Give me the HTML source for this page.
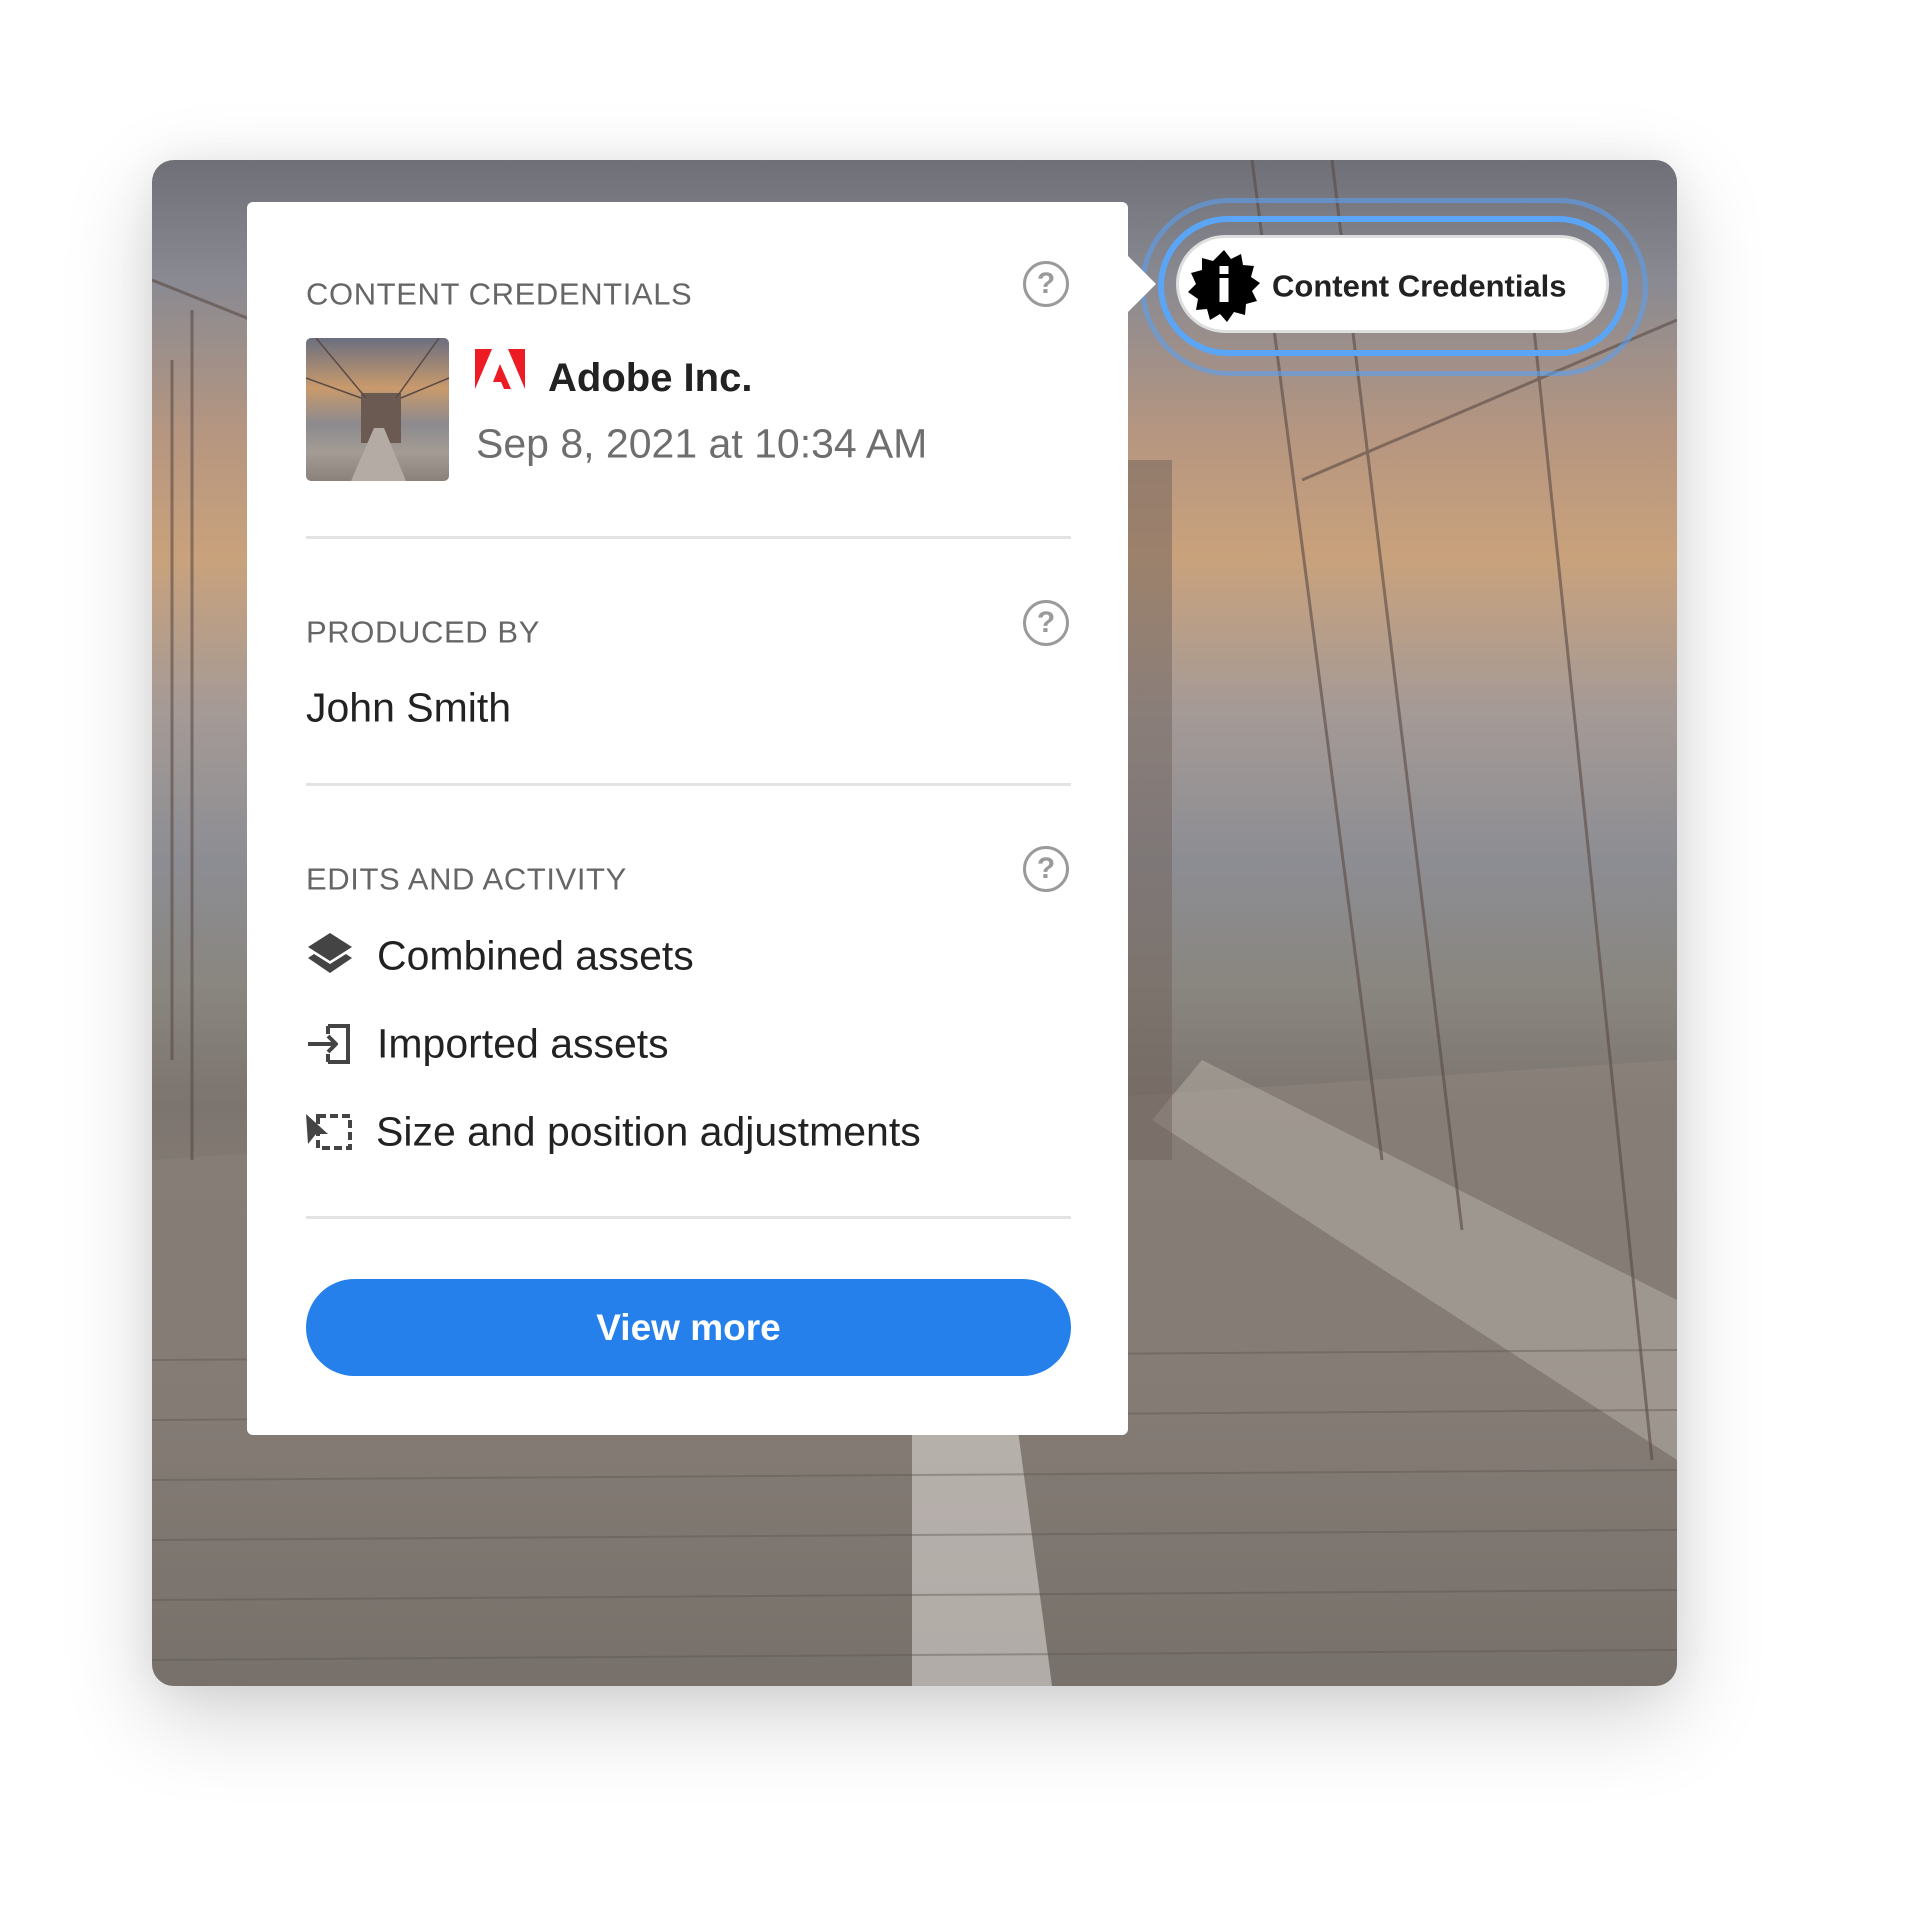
<!DOCTYPE html>
<html><head><meta charset="utf-8">
<style>
*{margin:0;padding:0;box-sizing:border-box}
html,body{width:1920px;height:1920px;background:#fff;overflow:hidden;font-family:"Liberation Sans",sans-serif}
.card{position:absolute;left:152px;top:160px;width:1525px;height:1526px;border-radius:22px;overflow:hidden;
box-shadow:0 30px 90px rgba(0,0,0,.18),0 0 40px rgba(0,0,0,.06);
background:linear-gradient(180deg,#6f6f78 0%,#8a8a92 8%,#b69680 18%,#c9a27c 26%,#a59a96 36%,#8c8d93 46%,#8a8680 54%,#7c746e 62%,#8a817a 72%,#968d85 82%,#8b847e 100%)}
.abs{position:absolute}
.panel{position:absolute;left:247px;top:202px;width:881px;height:1233px;background:#fff;border-radius:6px}
.lbl{position:absolute;left:306px;font-size:31px;color:#666;letter-spacing:.6px;line-height:1;transform:translateY(-50%)}
.help{position:absolute;width:46px;height:46px;border:3px solid #9a9a9a;border-radius:50%;color:#9a9a9a;font-size:30px;font-weight:bold;line-height:40px;text-align:center;transform:translate(-50%,-50%)}
.div{position:absolute;left:306px;width:765px;height:3px;background:#e3e3e3}
.txt{position:absolute;line-height:1;transform:translateY(-50%);white-space:nowrap}
</style></head><body>
<div class="card">
<svg class="abs" style="left:0;top:0" width="1525" height="1526" viewBox="0 0 1525 1526">
 <defs>
  <linearGradient id="deck" x1="0" y1="0" x2="0" y2="1"><stop offset="0" stop-color="#8c837c"/><stop offset="1" stop-color="#6f6862"/></linearGradient>
 </defs>
 <path d="M0 1000 L1525 900 L1525 1526 L0 1526Z" fill="url(#deck)" opacity=".7"/>
 <path d="M1050 900 L1525 1140 L1525 1300 L1000 960Z" fill="#b8b1aa" opacity=".5"/>
 <path d="M760 1000 L830 1000 L900 1526 L760 1526Z" fill="#d8d4d0" opacity=".6"/>
 <g stroke="#5a4a44" stroke-width="3" opacity=".6">
  <line x1="1100" y1="0" x2="1230" y2="1000"/><line x1="1180" y1="0" x2="1310" y2="1070"/>
  <line x1="1380" y1="150" x2="1500" y2="1300"/><line x1="860" y1="200" x2="860" y2="1000"/>
  <line x1="0" y1="120" x2="150" y2="180"/><line x1="1150" y1="320" x2="1525" y2="160"/>
  <line x1="20" y1="200" x2="20" y2="900"/><line x1="40" y1="150" x2="40" y2="1000"/>
 </g>
 <rect x="960" y="300" width="60" height="700" fill="#6f625c" opacity=".5"/>
 <g stroke="#5b5550" stroke-width="2" opacity=".4">
  <line x1="0" y1="1200" x2="1525" y2="1190"/><line x1="0" y1="1260" x2="1525" y2="1250"/>
  <line x1="0" y1="1320" x2="1525" y2="1310"/><line x1="0" y1="1380" x2="1525" y2="1370"/>
  <line x1="0" y1="1440" x2="1525" y2="1430"/><line x1="0" y1="1500" x2="1525" y2="1490"/>
 </g>
</svg>
</div>

<div class="abs" style="left:1140px;top:198px;width:508px;height:178px;border:5px solid rgba(90,160,240,.6);border-radius:89px"></div>
<div class="abs" style="left:1158px;top:216px;width:470px;height:140px;border:6px solid #5aa5f5;border-radius:70px"></div>
<div class="abs" style="left:1176px;top:235px;width:433px;height:98px;background:#fff;border:3px solid #dedede;border-radius:49px"></div>
<svg class="abs" style="left:1186px;top:248px" width="76" height="76" viewBox="-38 -38 76 76">
 <polygon fill="#000" points="0,-36 7,-27 17,-32 19,-21 30,-20 27,-9 36,-3 28,5 33,15 22,18 21,29 10,26 3,36 -4,28 -14,34 -17,23 -28,24 -26,13 -36,6 -28,-2 -33,-13 -22,-16 -22,-28 -11,-25"/>
 <rect x="-4.5" y="-8" width="9" height="24" fill="#fff"/><rect x="-4.5" y="-20" width="9" height="8" fill="#fff"/>
</svg>
<div class="txt" style="left:1272px;top:286px;font-size:31px;font-weight:bold;color:#222">Content Credentials</div>

<svg class="abs" style="left:1126px;top:254px" width="32" height="60"><polygon points="0,0 30,30 0,60" fill="#fff"/></svg>

<div class="panel"></div>
<div class="lbl" style="top:294px">CONTENT CREDENTIALS</div>
<div class="help" style="left:1046px;top:284px">?</div>

<div class="abs" style="left:306px;top:338px;width:143px;height:143px;border-radius:5px;overflow:hidden;background:linear-gradient(180deg,#6b6f80 0%,#c99a6c 35%,#8c8a8e 60%,#a49c94 80%,#8a827a 100%)">
 <svg width="143" height="143"><rect x="55" y="55" width="40" height="50" fill="#6a5a52"/><path d="M45 143 L68 90 L78 90 L100 143Z" fill="#b4aca4"/><g stroke="#5a4a44" stroke-width="1.5"><line x1="10" y1="0" x2="60" y2="60"/><line x1="133" y1="0" x2="90" y2="60"/><line x1="0" y1="40" x2="55" y2="60"/><line x1="143" y1="40" x2="95" y2="60"/></g></svg>
</div>
<svg class="abs" style="left:475px;top:349px" width="50" height="47" viewBox="0 0 50 47">
 <polygon points="0,0 17,0 0,40" fill="#ed1c24"/><polygon points="33,0 50,0 50,40" fill="#ed1c24"/><polygon points="25,15 36,40 29,40 26,33 18,33" fill="#ed1c24"/>
</svg>
<div class="txt" style="left:548px;top:378px;font-size:40px;font-weight:bold;color:#222">Adobe Inc.</div>
<div class="txt" style="left:476px;top:444px;font-size:41px;color:#6e6e6e">Sep 8, 2021 at 10:34 AM</div>
<div class="div" style="top:536px"></div>

<div class="lbl" style="top:632px">PRODUCED BY</div>
<div class="help" style="left:1046px;top:623px">?</div>
<div class="txt" style="left:306px;top:708px;font-size:41px;color:#222">John Smith</div>
<div class="div" style="top:783px"></div>

<div class="lbl" style="top:879px">EDITS AND ACTIVITY</div>
<div class="help" style="left:1046px;top:869px">?</div>

<svg class="abs" style="left:306px;top:931px" width="48" height="48" viewBox="0 0 48 48">
 <polygon points="24,2 46,16 24,30 2,16" fill="#444"/><polygon points="2,27 8,23 24,33 40,23 46,27 24,42" fill="#444"/>
</svg>
<div class="txt" style="left:377px;top:956px;font-size:41px;color:#222">Combined assets</div>
<svg class="abs" style="left:306px;top:1020px" width="48" height="48" viewBox="0 0 48 48" fill="none" stroke="#444" stroke-width="4">
 <path d="M22 6 H42 V42 H22 M22 6 V14 M22 42 V34"/><path d="M2 24 H30 M22 16 L30 24 L22 32" stroke-linejoin="round"/>
</svg>
<div class="txt" style="left:377px;top:1044px;font-size:41px;color:#222">Imported assets</div>
<svg class="abs" style="left:304px;top:1110px" width="52" height="46" viewBox="0 0 52 46">
 <rect x="14" y="6" width="32" height="32" fill="none" stroke="#444" stroke-width="4" stroke-dasharray="8 4"/>
 <polygon points="2,4 24,24 12,24 4,34" fill="#444"/>
</svg>
<div class="txt" style="left:376px;top:1132px;font-size:41px;color:#222">Size and position adjustments</div>
<div class="div" style="top:1216px"></div>

<div class="abs" style="left:306px;top:1279px;width:765px;height:97px;border-radius:49px;background:#2680eb;color:#fff;font-size:37px;font-weight:bold;text-align:center;line-height:97px">View more</div>
</body></html>
